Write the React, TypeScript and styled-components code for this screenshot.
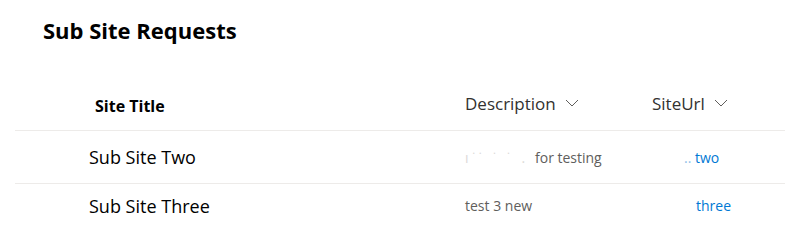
import styled, {createGlobalStyle} from "styled-components";

const GlobalStyle = createGlobalStyle`
    html, body {
        margin: 0;
        padding: 0;
        background: #ffffff;
    }
    body {
        font-family: "Open Sans", "Noto Sans", sans-serif;
        color: #000000;
    }
`

const PageWrapper = styled.div`
    width: 785px;
    height: 233px;
    overflow: hidden;
    display: flex;
    flex-direction: column;
`

const PageTitle = styled.h1`
    flex-shrink: 0;
    margin: 0;
    padding: 14px 0 0 43px;
    height: 66px;
    box-sizing: border-box;
    font-size: 22px;
    font-weight: 700;
    line-height: 32px;
    color: #000000;
`

const ListTable = styled.div`
    flex-shrink: 0;
    margin-left: 15px;
    display: grid;
    grid-template-columns: 450px 187px 1fr;
`

const HeaderCell = styled.div<{$pad: number; $bold?: boolean}>`
    height: 65px;
    box-sizing: border-box;
    display: flex;
    align-items: flex-end;
    gap: 9px;
    padding-left: ${p => p.$pad}px;
    padding-bottom: ${p => (p.$bold ? "12px" : "14px")};
    border-bottom: 1px solid #edebe9;
    font-size: ${p => (p.$bold ? "16px" : "17px")};
    line-height: 24px;
    font-weight: ${p => (p.$bold ? 700 : 400)};
    color: ${p => (p.$bold ? "#000000" : "#323130")};

    svg {
        margin-bottom: 9px;
    }
`

const Cell = styled.div<{$pad: number}>`
    height: 53px;
    box-sizing: border-box;
    display: flex;
    align-items: center;
    padding-left: ${p => p.$pad}px;
    border-bottom: 1px solid #edebe9;
`

const LastCell = styled(Cell)`
    border-bottom: none;
    padding-bottom: 10px;
`

const TitleText = styled.span`
    font-size: 18px;
    color: #000000;
`

const DescText = styled.span`
    font-size: 14px;
    color: #605e5c;
`

const FaintText = styled.span`
    display: inline-block;
    width: 70px;
    color: #dcdad8;
    letter-spacing: 4px;
`

const UrlLink = styled.a`
    font-size: 14px;
    color: #0078d4;
    text-decoration: none;
`

const FaintDots = styled.span`
    color: #8fc0e8;
`

function Chevron() {
    return (
        <svg width="14" height="8" viewBox="0 0 14 8" fill="none">
            <path d="M1 1 L7 7 L13 1" stroke="#605e5c" strokeWidth="1" />
        </svg>
    )
}

function App() {
    return (
        <>
            <GlobalStyle/>
            <PageWrapper>
                <PageTitle>Sub Site Requests</PageTitle>
                <ListTable>
                    <HeaderCell $pad={80} $bold>Site Title</HeaderCell>
                    <HeaderCell $pad={0}>Description <Chevron/></HeaderCell>
                    <HeaderCell $pad={0}>SiteUrl <Chevron/></HeaderCell>

                    <Cell $pad={74}><TitleText>Sub Site Two</TitleText></Cell>
                    <Cell $pad={0}>
                        <DescText><FaintText>ı˙˙ ˙ ˙ .</FaintText>for testing</DescText>
                    </Cell>
                    <Cell $pad={32}>
                        <UrlLink href="#"><FaintDots>..</FaintDots> two</UrlLink>
                    </Cell>

                    <LastCell $pad={74}><TitleText>Sub Site Three</TitleText></LastCell>
                    <LastCell $pad={0}><DescText>test 3 new</DescText></LastCell>
                    <LastCell $pad={44}><UrlLink href="#">three</UrlLink></LastCell>
                </ListTable>
            </PageWrapper>
        </>
    )
}

export default App;
